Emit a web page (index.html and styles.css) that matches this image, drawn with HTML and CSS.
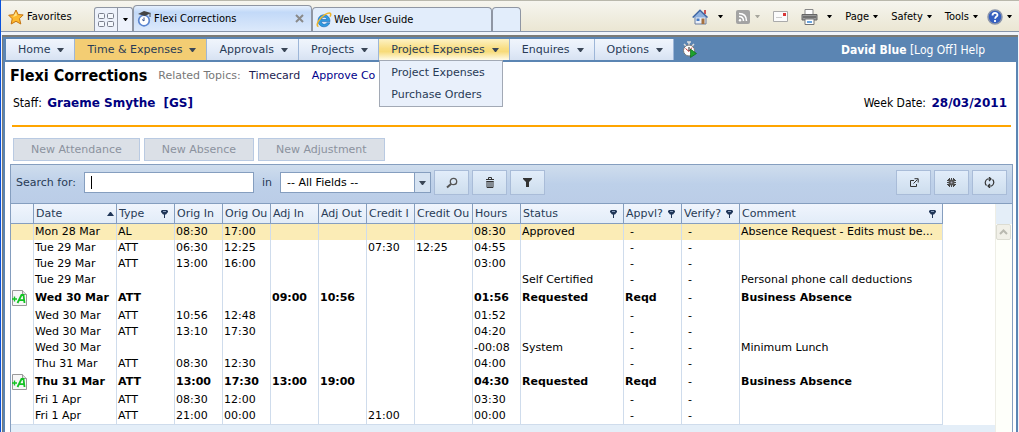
FILE: index.html
```html
<!DOCTYPE html>
<html lang="en">
<head>
<meta charset="utf-8">
<meta name="viewport" content="width=device-width, initial-scale=1">
<title>Flexi Corrections</title>
<link rel="stylesheet" href="styles.css">
</head>
<body>
<svg class="defs" aria-hidden="true">
  <defs>
    <symbol id="caret" viewBox="0 0 7 4"><path d="M0 0h7L4 4H3z"/></symbol>
    <symbol id="pin" viewBox="0 0 7 8"><path d="M1 0h5l1 1v1L5 4.500H4V8H3V4.500H2L0 2V1z"/><path d="M2 1h3v1H2z" fill="#8499b8"/></symbol>
    <symbol id="ie" viewBox="0 0 16 16">
      <path d="M14 9.600H5.500c.2 3.200 4 3.600 5.200 1.200h3.200C11.500 17 2 15.800 2 8.800 2 1 14 .5 14 9.600zM5.600 7.500h5.200c-.4-3-4.800-3-5.200 0z" fill="#2f9be0" stroke="#1763b4" stroke-width=".6"/>
      <path d="M2.500 14.500C-1 14 3 6 9 2.600c5-2.800 7-1.400 5 2" fill="none" stroke="#efb52c" stroke-width="1.500"/>
    </symbol>
    <symbol id="plus-a" viewBox="0 0 15 16">
      <path d="M.5.500h10l4 4v11H.5z" fill="#f7f7f7" stroke="#999"/><path d="M10.500.500v4h4" fill="#ddd" stroke="#999"/>
      <path d="M0 9h5M2.500 6.500v5" stroke="#12c222" stroke-width="1.400"/>
      <path d="M5.500 13l4-8h2l1 8M7.500 10.200h4.500" fill="none" stroke="#12c222" stroke-width="1.800"/>
    </symbol>
  </defs>
</svg>

<header class="browser">
  <button class="favorites"><svg width="16" height="16" viewBox="0 0 16 16"><path d="M8 1l2.200 4.600 5 .3-3.700 3.700 1.300 5.400L8 12.300 3.200 15l1-5.200L.7 6.200l5-.5z" fill="#fdb92e" stroke="#c57412"/><path d="M8 3l1 3.500-4 1.500z" fill="#ffe58c"/></svg>Favorites</button>
  <div class="quick">
    <button class="quick-grid" aria-label="Quick tabs"><svg width="16" height="14" viewBox="0 0 16 14" fill="#f4f8fd" stroke="#7a7f8c"><rect x=".5" y=".5" width="6" height="5" rx="1"/><rect x="9.500" y=".5" width="6" height="5" rx="1"/><rect x=".5" y="8.500" width="6" height="5" rx="1"/><rect x="9.500" y="8.500" width="6" height="5" rx="1"/></svg></button>
    <button class="quick-more" aria-label="Tab list"><svg class="mini" ><use href="#caret"/></svg></button>
  </div>
  <div class="tab tab-active"><svg width="15" height="17" viewBox="0 0 15 17"><circle cx="7" cy="10.500" r="5.300" fill="#fff" stroke="#5b86d0" stroke-width="1.700"/><path d="M7 7.500v3.500l-2-1.500" fill="none" stroke="#35518e"/><path d="M1 4l6-3 7 2-6 3z" fill="#444"/><path d="M13 3v4" stroke="#444"/></svg><span>Flexi Corrections</span><button class="close" aria-label="Close tab"><svg width="9" height="9" viewBox="0 0 9 9"><path d="M1 1l7 7M8 1L1 8" stroke="#8a8a8a" stroke-width="2"/></svg></button></div>
  <div class="tab tab-second"><svg width="16" height="16"><use href="#ie"/></svg><span>Web User Guide</span></div>
  <div class="tab tab-new"></div>
  <div class="commands">
    <button aria-label="Home page"><svg width="17" height="16" viewBox="0 0 17 16"><path d="M3 7h11v8H3z" fill="#e9eef7" stroke="#6e7f9c"/><path d="M12 1h2v4h-2z" fill="#c55"/><path d="M.7 8.500L8 1.300l7.500 7.200" fill="#8eb0de" stroke="#3f66a3" stroke-width="1.500"/><path d="M4.500 9.500h3V12h-3z" fill="#467bc4"/><path d="M9.500 9.500h3V15h-3z" fill="#a5713f"/></svg><svg class="mini"><use href="#caret"/></svg></button>
    <button aria-label="Feeds"><svg width="14" height="14" viewBox="0 0 14 14"><rect width="14" height="14" rx="2" fill="#a3a3a3"/><circle cx="4" cy="10.300" r="1.200" fill="#fff"/><path d="M3 6.500q4.500 0 4.500 4.500M3 3.500q7.500 0 7.500 7.500" fill="none" stroke="#fff" stroke-width="1.500"/></svg><svg class="mini faint"><use href="#caret"/></svg></button>
    <button aria-label="Read mail"><svg width="15" height="11" viewBox="0 0 15 11"><path d="M.5.500h14v10H.5z" fill="#fbfbfb" stroke="#aaa"/><path d="M10 2h3v3h-3z" fill="#d93636"/><path d="M3 6.500h6" stroke="#ccc"/></svg></button>
    <button aria-label="Print"><svg width="17" height="16" viewBox="0 0 17 16"><path d="M4 .5h8V6H4z" fill="#fff" stroke="#888"/><path d="M1 5.500h15V11H1z" fill="#9a9a9a" stroke="#666"/><path d="M2 8h13" stroke="#444"/><path d="M4 10h9v5.500H4z" fill="#fff" stroke="#777"/><path d="M6 12h5v2H6z" fill="#6ba5de"/></svg><svg class="mini"><use href="#caret"/></svg></button>
    <button>Page<svg class="mini"><use href="#caret"/></svg></button>
    <button>Safety<svg class="mini"><use href="#caret"/></svg></button>
    <button>Tools<svg class="mini"><use href="#caret"/></svg></button>
    <button class="help" aria-label="Help"><svg width="16" height="16" viewBox="0 0 16 16"><circle cx="8" cy="8" r="7" fill="#355fc0" stroke="#8c95aa" stroke-width="1.500"/><path d="M5.500 6.500c0-3.500 5-3.200 5-.6 0 1.600-2.400 1.800-2.400 3.800M8 11v2" fill="none" stroke="#fff" stroke-width="1.800"/></svg><svg class="mini"><use href="#caret"/></svg></button>
  </div>
</header>

<div class="frame">
<nav class="menubar">
  <ul class="menu">
    <li><button>Home<svg class="caret"><use href="#caret"/></svg></button></li>
    <li><button class="current">Time &amp; Expenses<svg class="caret"><use href="#caret"/></svg></button></li>
    <li><button>Approvals<svg class="caret"><use href="#caret"/></svg></button></li>
    <li><button>Projects<svg class="caret"><use href="#caret"/></svg></button></li>
    <li><button class="open" aria-expanded="true">Project Expenses<svg class="caret"><use href="#caret"/></svg></button>
      <ul class="submenu"><li><a href="#">Project Expenses</a></li><li><a href="#">Purchase Orders</a></li></ul>
    </li>
    <li><button>Enquires<svg class="caret"><use href="#caret"/></svg></button></li>
    <li><button>Options<svg class="caret"><use href="#caret"/></svg></button></li>
  </ul>
  <button class="clock" aria-label="Clock on"><svg width="16" height="17" viewBox="0 0 16 17"><path d="M5 1h4M7 1v3M2 3l2 2M12 3l-2 2" stroke="#ddd" stroke-width="1.500"/><circle cx="7" cy="9.500" r="5.500" fill="#fff" stroke="#777"/><path d="M3.500 7.500L7 10.500l3-4" fill="none" stroke="#c33"/><path d="M7 10V6" stroke="#222"/><path d="M8.500 8l6 4.500-6 4z" fill="#1da12c" stroke="#0b6a17" stroke-width=".7"/></svg></button>
  <div class="user"><strong>David Blue</strong> <a href="#">[Log Off]</a> <a href="#">Help</a></div>
</nav>

<main class="page">
  <div class="heading">
    <h1>Flexi Corrections</h1>
    <p class="related">Related Topics: <a href="#">Timecard</a> <a class="approve" href="#">Approve Co</a></p>
  </div>
  <div class="staff">
    <div>Staff: <strong>Graeme Smythe</strong><strong>[GS]</strong></div>
    <div>Week Date: <strong>28/03/2011</strong></div>
  </div>
  <div class="actions">
    <button disabled>New Attendance</button>
    <button disabled>New Absence</button>
    <button disabled>New Adjustment</button>
  </div>

  <section class="grid">
    <div class="toolbar">
      <label class="search-label" for="search">Search for:</label><input id="search" type="text" autofocus>
      <label class="in" for="field">in</label>
      <div class="combo"><select id="field"><option>-- All Fields --</option></select><span class="combo-arrow"><svg class="caret"><use href="#caret"/></svg></span></div>
      <button aria-label="Search"><svg width="12" height="12" viewBox="0 0 12 12" fill="none" stroke="#555"><circle cx="7.500" cy="4.500" r="3.200" stroke-width="1.300"/><path d="M5 7L1 10.500" stroke-width="2"/></svg></button>
      <button aria-label="Clear"><svg width="10" height="11" viewBox="0 0 10 11" fill="none" stroke="#333"><path d="M1 2.500h8M3.500 2V.5h3V2M1.500 4.500h7M2 4v6.500h6V4M4 5v5M6 5v5"/></svg></button>
      <button aria-label="Filter"><svg width="9" height="9" viewBox="0 0 9 9"><path d="M0 0h9v1L6 4v5H3V4L0 1z" fill="#333"/></svg></button>
      <span class="spacer"></span>
      <button aria-label="Export"><svg width="10" height="10" viewBox="0 0 10 10" fill="none" stroke="#333"><path d="M5 2.500H1.500v6h6V6M4.500 5.500l4-4M5.500.700h3.700v3.800"/></svg></button>
      <button aria-label="Settings"><svg width="9" height="9" viewBox="0 0 9 9"><path d="M2.500 0v9M4.500 0v9M6.500 0v9M0 2.500h9M0 4.500h9M0 6.500h9" stroke="#444"/><path d="M1 1l7 7M8 1L1 8" stroke="#444"/><circle cx="4.500" cy="4.500" r="3" fill="#555"/><circle cx="4.500" cy="4.500" r="1" fill="#aab"/></svg></button>
      <button aria-label="Refresh"><svg width="11" height="11" viewBox="0 0 11 11" fill="none" stroke="#333" stroke-width="1.200"><path d="M2.500 8.500A4 4 0 0 1 3.500 2H7M5 0l2 2-2 2M8.500 2.500A4 4 0 0 1 7.500 9H4M6 7L4 9l2 2"/></svg></button>
    </div>
    <div class="scroll">
      <div class="rows">
      <table>
        <colgroup><col class="w-icon"><col class="w-date"><col class="w-mid"><col class="w-time"><col class="w-time"><col class="w-time"><col class="w-time"><col class="w-time"><col class="w-mid"><col class="w-time"><col class="w-status"><col class="w-mid"><col class="w-mid"><col class="w-comment"></colgroup>
        <thead><tr>
          <th></th>
          <th><div class="marked">Date<svg class="sort" viewBox="0 0 7 4"><path d="M3 0h1l3 4H0z"/></svg></div></th>
          <th><div class="marked">Type<svg class="pin"><use href="#pin"/></svg></div></th>
          <th><div>Orig In</div></th><th><div>Orig Ou</div></th><th><div>Adj In</div></th><th><div>Adj Out</div></th><th><div>Credit I</div></th><th><div>Credit Ou</div></th><th><div>Hours</div></th>
          <th><div class="marked">Status<svg class="pin"><use href="#pin"/></svg></div></th>
          <th><div class="marked">Appvl?<svg class="pin"><use href="#pin"/></svg></div></th>
          <th><div class="marked">Verify?<svg class="pin"><use href="#pin"/></svg></div></th>
          <th><div class="marked">Comment<svg class="pin"><use href="#pin"/></svg></div></th>
        </tr></thead>
        <tbody>
          <tr class="selected"><td></td><td>Mon 28 Mar</td><td>AL</td><td>08:30</td><td>17:00</td><td></td><td></td><td></td><td></td><td>08:30</td><td>Approved</td><td class="flag">-</td><td class="flag">-</td><td>Absence Request - Edits must be...</td></tr>
          <tr><td></td><td>Tue 29 Mar</td><td>ATT</td><td>06:30</td><td>12:25</td><td></td><td></td><td>07:30</td><td>12:25</td><td>04:55</td><td></td><td class="flag">-</td><td class="flag">-</td><td></td></tr>
          <tr><td></td><td>Tue 29 Mar</td><td>ATT</td><td>13:00</td><td>16:00</td><td></td><td></td><td></td><td></td><td>03:00</td><td></td><td class="flag">-</td><td class="flag">-</td><td></td></tr>
          <tr><td></td><td>Tue 29 Mar</td><td></td><td></td><td></td><td></td><td></td><td></td><td></td><td></td><td>Self Certified</td><td class="flag">-</td><td class="flag">-</td><td>Personal phone call deductions</td></tr>
          <tr class="request"><td><svg class="badge"><use href="#plus-a"/></svg></td><td>Wed 30 Mar</td><td>ATT</td><td></td><td></td><td>09:00</td><td>10:56</td><td></td><td></td><td>01:56</td><td>Requested</td><td>Reqd</td><td class="flag">-</td><td>Business Absence</td></tr>
          <tr><td></td><td>Wed 30 Mar</td><td>ATT</td><td>10:56</td><td>12:48</td><td></td><td></td><td></td><td></td><td>01:52</td><td></td><td class="flag">-</td><td class="flag">-</td><td></td></tr>
          <tr><td></td><td>Wed 30 Mar</td><td>ATT</td><td>13:10</td><td>17:30</td><td></td><td></td><td></td><td></td><td>04:20</td><td></td><td class="flag">-</td><td class="flag">-</td><td></td></tr>
          <tr><td></td><td>Wed 30 Mar</td><td></td><td></td><td></td><td></td><td></td><td></td><td></td><td>-00:08</td><td>System</td><td class="flag">-</td><td class="flag">-</td><td>Minimum Lunch</td></tr>
          <tr><td></td><td>Thu 31 Mar</td><td>ATT</td><td>08:30</td><td>12:30</td><td></td><td></td><td></td><td></td><td>04:00</td><td></td><td class="flag">-</td><td class="flag">-</td><td></td></tr>
          <tr class="request"><td><svg class="badge"><use href="#plus-a"/></svg></td><td>Thu 31 Mar</td><td>ATT</td><td>13:00</td><td>17:30</td><td>13:00</td><td>19:00</td><td></td><td></td><td>04:30</td><td>Requested</td><td>Reqd</td><td class="flag">-</td><td>Business Absence</td></tr>
          <tr><td></td><td>Fri 1 Apr</td><td>ATT</td><td>08:30</td><td>12:00</td><td></td><td></td><td></td><td></td><td>03:30</td><td></td><td class="flag">-</td><td class="flag">-</td><td></td></tr>
          <tr><td></td><td>Fri 1 Apr</td><td>ATT</td><td>21:00</td><td>00:00</td><td></td><td></td><td>21:00</td><td></td><td>00:00</td><td></td><td class="flag">-</td><td class="flag">-</td><td></td></tr>
        </tbody>
      </table>
      <div class="rest"></div>
      </div>
      <div class="scrollbar"><div class="corner"></div><button aria-label="Scroll up"><svg width="9" height="6" viewBox="0 0 9 6"><path d="M1 5l3.500-3.500L8 5" fill="none" stroke="#b9b9b0" stroke-width="2"/></svg></button></div>
    </div>
  </section>
</main>
</div>
</body>
</html>
```
FILE: styles.css
```css
* { box-sizing: border-box; }
body {
  margin: 0;
  height: 100vh;
  overflow: hidden;
  display: flex;
  flex-direction: column;
  background: #f0f4fa;
  border-left: 1px solid #0a52dc;
  font: 11px/16px "DejaVu Sans", Verdana, sans-serif;
  color: #000;
}
button { font: inherit; color: inherit; background: none; border: 0; padding: 0; display: flex; align-items: center; }
a { color: inherit; text-decoration: none; }
svg { flex: none; display: block; }
ul, p, h1 { margin: 0; padding: 0; list-style: none; }
.defs { position: absolute; width: 0; height: 0; }

/* Browser bar */
.browser {
  flex: none;
  height: 32px;
  display: flex;
  align-items: flex-end;
  border-top: 1px solid #b9b8ac;
  border-bottom: 1px solid #8795ab;
  background: linear-gradient(#f6f5ef, #efecde 60%, #ebe6d3);
  font: 11px/16px "DejaVu Sans Condensed", Tahoma, sans-serif;
}
.favorites { width: 93px; height: 28px; padding-left: 7px; gap: 3px; }
.quick { display: flex; width: 39px; height: 24px; border: 1px solid #8f96a3; border-bottom: 0; border-radius: 3px 3px 0 0; background: #edf2fb; }
.quick-grid { width: 23px; justify-content: center; border-right: 1px solid #8f96a3; }
.quick-more { flex: 1; justify-content: center; }
.mini { width: 5px; height: 3px; }
.faint { opacity: .3; }
.tab { display: flex; align-items: center; gap: 2px; padding-left: 3px; border: 1px solid #8f96a3; border-bottom: 0; border-radius: 4px 4px 0 0; height: 24px; background: #e2edfb; white-space: nowrap; }
.tab-active { width: 179px; height: 26px; background: linear-gradient(#e6f0fd, #c2d9f8 25%, #dce9fb); }
.tab-second { width: 180px; }
.tab-new { width: 29px; }
.close { margin-left: auto; margin-right: 7px; }
.commands { flex: 1; height: 29px; display: flex; align-items: center; justify-content: flex-end; gap: 13px; padding-right: 7px; }
.commands button { gap: 5px; }
.commands button:nth-child(1) { gap: 9px; }
.commands button:nth-child(4) { gap: 9px; }
.commands button:nth-child(n+5) { gap: 4px; }
.commands .help { margin-left: -4px; gap: 3px; }

/* Application frame */
.frame {
  flex: 1;
  min-height: 0;
  display: flex;
  flex-direction: column;
  margin: 3px 1px 0;
  border-top: 2px solid #7b7b76;
  border-left: 1px solid #7b7b76;
}
.menubar { flex: none; display: flex; align-items: center; height: 25px; padding: 2px 0 2px 3px; background: #5b85b3; }
.menu { display: flex; align-self: stretch; }
.menu > li { position: relative; display: flex; }
.menu button {
  padding: 0 10px 0 12px;
  gap: 7px;
  border-right: 1px solid #9db6d8;
  background: linear-gradient(#f0f5fc, #e5edf9 50%, #d7e2f2);
  color: #283b56;
  white-space: nowrap;
}
.menu button.current { background: #f3cd73; }
.menu button.open { background: linear-gradient(#fdf2c4, #f9de83 45%, #f7db7a 60%, #fffbe8); }
.caret { width: 7px; height: 4px; fill: #3a4656; }
.submenu { position: absolute; z-index: 2; top: 100%; left: 0; width: 124px; border: 1px solid #a2a9b5; background: #e9f0fb; color: #283b56; }
.submenu a { display: block; padding: 3px 11px; white-space: nowrap; }
.submenu li:first-child { padding-top: 1px; }
.clock { margin-left: 8px; }
.user { margin-left: auto; padding-right: 33px; color: #fff; font: 12px/16px "DejaVu Sans Condensed", Tahoma, sans-serif; }

/* Page */
.page { flex: 1; min-height: 0; display: flex; flex-direction: column; background: #fff; border-left: 2px solid #5b85b3; border-right: 2px solid #5b85b3; padding: 0 3px 0 5px; }
.heading { display: flex; align-items: center; gap: 11px; height: 28px; }
h1 { font: bold 16px/20px "DejaVu Sans Condensed", Tahoma, sans-serif; }
.related { color: #777; }
.related a { color: #1c1c50; margin-left: 5px; }
.related .approve { color: #00008b; margin-left: 8px; }
.staff { display: flex; justify-content: space-between; height: 37px; margin: 0 2px; padding: 5px 4px 0 1px; border-bottom: 2px solid #ffa500; font: 12px/16px "DejaVu Sans Condensed", Tahoma, sans-serif; }
.staff strong { margin-left: 2px; font: bold 12px/16px "DejaVu Sans", Verdana, sans-serif; color: #00007f; }
.staff strong + strong { margin-left: 8px; }
.actions { display: flex; gap: 4px; padding: 11px 3px 3px; }
.actions button { height: 23px; padding: 0 17px; border: 1px solid #b9cae2; background: #dbe0e7; color: #8b929e; }

.grid { flex: 1; min-height: 0; display: flex; flex-direction: column; border: 1px solid #859ebf; border-bottom: 0; }
.toolbar { flex: none; display: flex; align-items: center; height: 38px; padding: 0 5px 3px; gap: 4px; background: linear-gradient(#cfdded, #bdd0e9 50%, #bbcde7); color: #283b56; }
.search-label { width: 64px; white-space: nowrap; }
.toolbar input { width: 170px; height: 21px; padding: 0 5px; border: 1px solid #859ebf; background: #fff linear-gradient(#000, #000) no-repeat 6px 50% / 1px 13px; caret-color: transparent; font: inherit; outline: 0; }
.toolbar input:not(:placeholder-shown) { caret-color: auto; }
.toolbar .in { padding: 0 4px; }
.combo { position: relative; display: flex; width: 151px; height: 21px; margin-right: -1px; }
.combo select { appearance: none; width: 100%; padding: 0 6px; border: 1px solid #859ebf; border-radius: 0; background: #fff; font: inherit; color: #000; }
.combo-arrow { position: absolute; right: 1px; top: 1px; bottom: 1px; width: 16px; display: flex; align-items: center; justify-content: center; border-left: 1px solid #859ebf; background: #d6e3f2; pointer-events: none; }
.toolbar button { width: 35px; height: 25px; margin-right: -1px; justify-content: center; border: 1px solid #a9bcd8; background: linear-gradient(#e2edfa, #cddded); }
.toolbar button:last-child { margin-right: 0; }
.spacer { flex: 1; }

.scroll { flex: 1; min-height: 0; display: flex; border-top: 1px solid #859ebf; }
.rows { flex: 1; min-width: 0; overflow: hidden; display: flex; flex-direction: column; }
table { width: 932px; table-layout: fixed; border-collapse: separate; border-spacing: 0; flex: none; }
.w-icon { width: 23px; }
.w-date { width: 83px; }
.w-mid { width: 58px; }
.w-time { width: 48px; }
.w-status { width: 103px; }
.w-comment { width: 203px; }
th { height: 20px; padding: 0; border-right: 1px solid #859ebf; border-bottom: 1px solid #859ebf; background: linear-gradient(#f0f5fd, #e2ecf8); color: #283b56; font-weight: normal; text-align: left; }
th div { padding-left: 2px; white-space: nowrap; }
.marked { display: flex; align-items: center; justify-content: space-between; padding-right: 6px; }
.pin { width: 7px; height: 8px; fill: #1f3557; }
.sort { width: 7px; height: 4px; fill: #1f3557; }
th .sort { margin-right: -4px; }
td { height: 16px; padding: 0 0 0 1px; line-height: 16px; border-right: 1px solid #cfdcec; white-space: nowrap; overflow: hidden; }
tbody tr:last-child td { border-bottom: 1px solid #cfdcec; height: 17px; }
.selected td { background: #fbecb6; }
.request td { height: 20px; font-weight: bold; }
.request td.flag { font-weight: normal; }
.flag { padding-left: 6px; }
.badge { width: 15px; height: 16px; }
.rest { flex: 1; background: #e4eef8; }
.scrollbar { width: 17px; border-left: 1px solid #eeeee6; background: #fefffa; }
.corner { height: 20px; background: #e4eef8; }
.scrollbar button { width: 15px; height: 16px; justify-content: center; border: 1px solid #dcdcd2; border-radius: 2px; background: #f1f0e8; }
```
